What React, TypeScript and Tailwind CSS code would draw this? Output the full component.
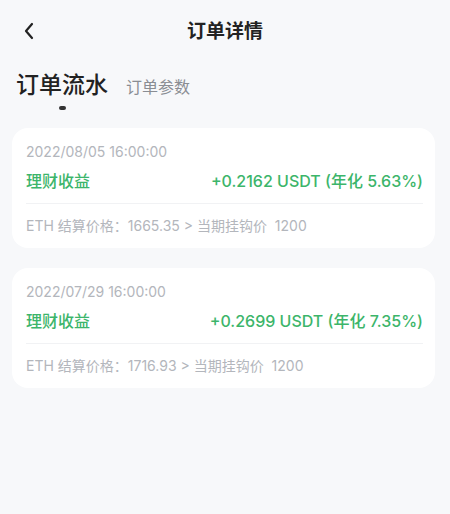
import React from "react";

const records = [
  {
    time: "2022/08/05 16:00:00",
    amount: "+0.2162 USDT (年化 5.63%)",
    price: "1665.35",
    strike: "1200",
  },
  {
    time: "2022/07/29 16:00:00",
    amount: "+0.2699 USDT (年化 7.35%)",
    price: "1716.93",
    strike: "1200",
  },
];

const font = {
  fontFamily: '"Inter", "Noto Sans CJK SC", sans-serif',
};

export default function App() {
  return (
    <div
      className="w-[450px] h-[514px] bg-[#f7f8fa] text-[#1f2022]"
      style={font}
    >
      {/* header */}
      <div className="relative flex h-[62px] items-center justify-center pt-[2px]">
        <button className="absolute left-[18px] top-[20px] flex h-[22px] w-[22px] items-center justify-center">
          <svg width="14" height="18" viewBox="0 0 14 18" fill="none">
            <path
              d="M10 2L4 9l6 7"
              stroke="#222"
              strokeWidth="2.2"
              strokeLinecap="round"
              strokeLinejoin="round"
            />
          </svg>
        </button>
        <h1 className="text-[19px] font-semibold text-[#222]">订单详情</h1>
      </div>

      {/* tabs */}
      <div className="flex items-end gap-[18px] px-[16px] pt-[8px]">
        <div className="flex flex-col items-center">
          <span className="text-[23px] font-medium leading-[30px] text-[#222]">
            订单流水
          </span>
          <span className="mt-[6px] h-[4px] w-[7px] rounded-full bg-[#333]" />
        </div>
        <span className="mb-[12px] text-[16px] leading-[22px] text-[#8a8d93]">
          订单参数
        </span>
      </div>

      {/* list */}
      <div className="mt-[18px] flex flex-col gap-[20px] pl-[12px] pr-[15px]">
        {records.map((r) => (
          <div
            key={r.time}
            className="rounded-[16px] bg-white pl-[14px] pr-[12px] pt-[14px] pb-[12px]"
          >
            <div className="text-[14px] leading-[20px] text-[#b3b6bc]">
              {r.time}
            </div>
            <div className="mt-[8px] flex items-center justify-between pb-[11px] text-[16px] leading-[22px] font-medium text-[#3cb56a]">
              <span>理财收益</span>
              <span>{r.amount}</span>
            </div>
            <div className="h-px bg-[#f1f2f4]" />
            <div className="mt-[12px] text-[14px] leading-[20px] text-[#b3b6bc]">
              ETH 结算价格：{r.price} &gt; 当期挂钩价&nbsp;&nbsp;{r.strike}
            </div>
          </div>
        ))}
      </div>
    </div>
  );
}
